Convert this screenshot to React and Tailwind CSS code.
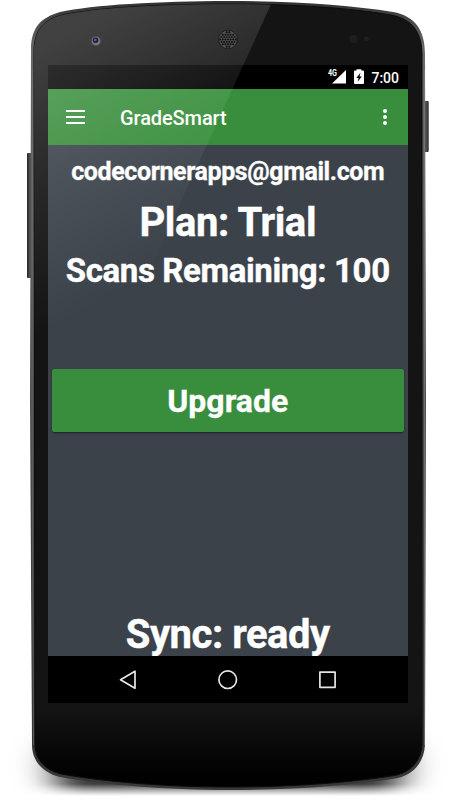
import React from "react";

const BODY =
  "M31 50 C31 28 40 18 60 12 C92 5 160 1 228 1 C296 1 350 5 393 12 C415 16 425 30 425 54 L426 400 L425 745 C424 762 414 774 398 778 C350 786 290 790 228 790 C166 790 106 785 60 777 C43 773 32 761 32 745 L30 400 Z";
const FACE =
  "M34 52 C34 30 43 20 62 15 C93 8 160 4 228 4 C296 4 350 8 391 15 C412 19 422 32 422 55 L422 745 C421 760 412 771 397 775 C350 783 290 787 228 787 C166 787 106 782 61 774 C45 770 35 759 35 745 Z";

const HOLES = [];
for (let r = -3; r <= 3; r++) {
  for (let c = -3; c <= 3; c++) {
    const x = c * 2.6 + (r % 2 ? 1.3 : 0);
    const y = r * 2.4;
    if (x * x + y * y < 66) HOLES.push([x, y]);
  }
}

function PhoneShell() {
  return (
    <svg className="absolute inset-0" width="456" height="800" viewBox="0 0 456 800" aria-hidden="true">
      <defs>
        <linearGradient id="rim" x1="0" y1="0" x2="0" y2="1">
          <stop offset="0" stopColor="#303132" />
          <stop offset="0.06" stopColor="#67696a" />
          <stop offset="0.5" stopColor="#4c4d4e" />
          <stop offset="0.9" stopColor="#333" />
          <stop offset="1" stopColor="#383838" />
        </linearGradient>
        <linearGradient id="face" x1="0" y1="0" x2="0" y2="1">
          <stop offset="0" stopColor="#141414" />
          <stop offset="0.9" stopColor="#141414" />
          <stop offset="0.97" stopColor="#040404" />
          <stop offset="1" stopColor="#000" />
        </linearGradient>
        <linearGradient id="key" x1="0" y1="0" x2="1" y2="0">
          <stop offset="0" stopColor="#222" />
          <stop offset="0.5" stopColor="#555" />
          <stop offset="1" stopColor="#2a2a2a" />
        </linearGradient>
        <filter id="wide" x="-20%" y="-100%" width="140%" height="300%">
          <feGaussianBlur stdDeviation="16 16" />
        </filter>
        <linearGradient id="fade" x1="0" y1="0" x2="0" y2="1">
          <stop offset="0" stopColor="#fff" />
          <stop offset="0.84" stopColor="#fff" />
          <stop offset="0.96" stopColor="#000" />
        </linearGradient>
        <mask id="floor" maskUnits="userSpaceOnUse" x="0" y="700" width="456" height="100">
          <rect x="0" y="700" width="456" height="100" fill="url(#fade)" />
        </mask>
      </defs>
      <g mask="url(#floor)">
        <path d="M40 758 Q228 778 416 758 L384 800 H72 Z" fill="#000" filter="url(#wide)" />
      </g>
      <rect x="27" y="153" width="6" height="125" rx="1" fill="url(#key)" />
      <rect x="423" y="101" width="5.7" height="51" rx="1" fill="url(#key)" />
      <path d={BODY} fill="url(#rim)" />
      <path d={FACE} fill="url(#face)" stroke="#0c0c0c" strokeWidth="1" />
      <path d="M32.5 70 L32 400 L33.5 745" fill="none" stroke="#777" strokeWidth="0.6" />
      <path d="M424.5 70 V745" fill="none" stroke="#777" strokeWidth="0.8" />
    </svg>
  );
}

function Reflection() {
  return (
    <svg className="pointer-events-none absolute inset-0" width="456" height="800" viewBox="0 0 456 800" aria-hidden="true">
      <defs>
        <linearGradient id="shine" gradientUnits="userSpaceOnUse" x1="60" y1="40" x2="180" y2="260">
          <stop offset="0" stopColor="#fff" stopOpacity="0.19" />
          <stop offset="0.45" stopColor="#fff" stopOpacity="0.09" />
          <stop offset="1" stopColor="#fff" stopOpacity="0" />
        </linearGradient>
        <clipPath id="glass">
          <path d={FACE} />
        </clipPath>
      </defs>
      <path d="M30 0 H273 L114 348 H30 Z" fill="url(#shine)" clipPath="url(#glass)" />
      <circle cx="96" cy="41" r="5" fill="#555" />
      <circle cx="96" cy="41" r="3.8" fill="#858589" />
      <circle cx="95.6" cy="40.3" r="2.9" fill="#24243c" />
      <circle cx="95.2" cy="40" r="1.2" fill="#5555bb" />
      <circle cx="228" cy="39.5" r="9.4" fill="#505050" stroke="#1c1c1c" strokeWidth="1" />
      <g fill="#0a0a0a">
        {HOLES.map(([x, y], i) => (
          <circle key={i} cx={228 + x} cy={39.5 + y} r="0.95" />
        ))}
      </g>
      <circle cx="353.5" cy="39" r="4" fill="#201d1e" />
      <circle cx="366.5" cy="39" r="2.5" fill="#201d1e" />
    </svg>
  );
}

function StatusBar() {
  return (
    <div className="flex h-6 shrink-0 items-center justify-end bg-black pr-[8.5px]">
      <svg className="h-6 w-[38px]" viewBox="0 0 38 24" aria-hidden="true">
        <path d="M19 5 V18.500 H5 Z" fill="#fff" />
        <path
          d="M27 6.500 Q27 5.600 28 5.600 H29.500 V4.300 H34.300 V5.600 H36 Q37 5.600 37 6.500 V18 Q37 19 36 19 H28 Q27 19 27 18 Z"
          fill="#fff"
        />
        <path d="M33.500 7.800 L29.300 13 H31.600 L30.700 16.700 L34.800 11.600 H32.500 Z" fill="#000" />
        <text x="1" y="11" fill="#fff" fontSize="8.500" fontWeight="700" fontFamily="Roboto" textLength="9" lengthAdjust="spacingAndGlyphs">
          4G
        </text>
      </svg>
      <span className="ml-[6px] pt-px text-[14px] leading-6 font-medium">7:00</span>
    </div>
  );
}

function Toolbar() {
  return (
    <header className="flex h-14 shrink-0 items-center bg-[#388e3c]">
      <button className="ml-[18px] flex w-[19px] flex-col gap-1" aria-label="Menu">
        <span className="h-[2px] bg-white" />
        <span className="h-[2px] bg-white" />
        <span className="h-[2px] bg-white" />
      </button>
      <h1 className="ml-[35px] pt-[2px] text-[20px] leading-7 font-medium tracking-[-0.1px]">GradeSmart</h1>
      <button className="mr-5 ml-auto flex w-[5px] flex-col items-center gap-[2px]" aria-label="More options">
        <span className="size-1 rounded-full bg-white" />
        <span className="size-1 rounded-full bg-white" />
        <span className="size-1 rounded-full bg-white" />
      </button>
    </header>
  );
}

function NavBar() {
  return (
    <nav className="flex h-[47px] shrink-0 items-center justify-center gap-[76px] bg-black">
      <svg width="24" height="24" viewBox="0 0 24 24" fill="none" stroke="#e6e6e6" strokeWidth="1.700" strokeLinejoin="round">
        <path d="M19 3.200 V20.200 L4.500 11.700 Z" />
      </svg>
      <svg width="24" height="24" viewBox="0 0 24 24" fill="none" stroke="#e6e6e6" strokeWidth="1.700">
        <circle cx="11.700" cy="11.700" r="8.800" />
      </svg>
      <svg width="24" height="24" viewBox="0 0 24 24" fill="none" stroke="#e6e6e6" strokeWidth="1.700" strokeLinejoin="round">
        <rect x="3.900" y="4.100" width="15.200" height="15.200" />
      </svg>
    </nav>
  );
}

export default function App() {
  return (
    <div className="relative h-[800px] w-[456px] overflow-hidden bg-white font-['Roboto',sans-serif] text-white">
      <PhoneShell />
      <div className="relative pt-[65px] pl-12">
        <div className="flex h-[638px] w-[359.5px] flex-col">
          <StatusBar />
          <Toolbar />
          <main className="flex grow flex-col items-center bg-[#3b424a] font-bold whitespace-nowrap">
            <p className="mt-[11px] text-[25px] leading-8 tracking-[-0.4px] [-webkit-text-stroke:0.3px_white]">codecornerapps@gmail.com</p>
            <p className="mt-[11px] text-[40px] leading-[47px] tracking-[-0.4px] [-webkit-text-stroke:0.4px_white]">Plan: Trial</p>
            <p className="mt-[6px] text-[33px] leading-[38px] tracking-[-0.39px] [-webkit-text-stroke:0.4px_white]">Scans Remaining: 100</p>
            <button className="mt-[79px] h-[63px] w-[352px] rounded-[2px] bg-[#388e3c] pt-px text-[32px] leading-[63px] shadow-[0_1px_2px_rgba(0,0,0,0.5)] [-webkit-text-stroke:0.3px_white]">
              Upgrade
            </button>
            <p className="mt-auto -mb-[2px] text-[40px] leading-[47px] tracking-[-0.48px] [-webkit-text-stroke:0.4px_white]">Sync: ready</p>
          </main>
          <NavBar />
        </div>
      </div>
      <Reflection />
    </div>
  );
}
